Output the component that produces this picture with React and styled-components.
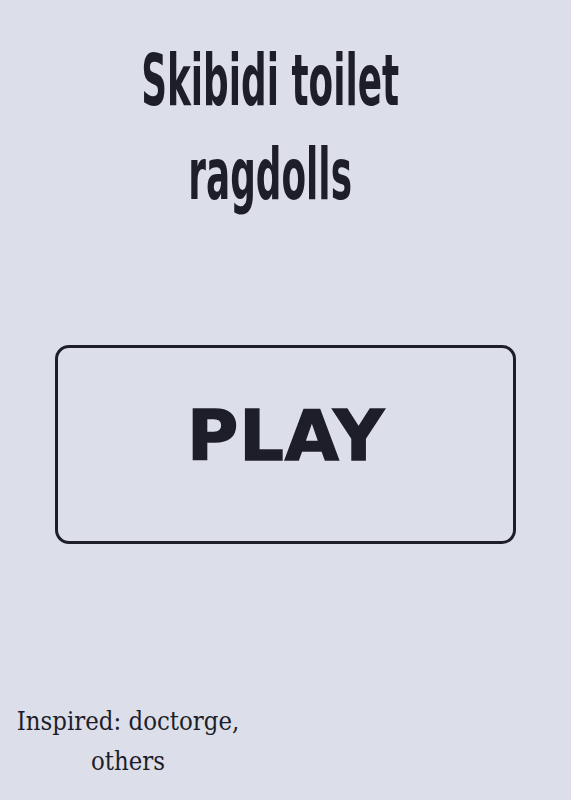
import React from "react";
import styled, { createGlobalStyle } from "styled-components";

const GlobalStyle = createGlobalStyle`
  html, body {
    margin: 0;
    padding: 0;
    background: #dcdfea;
  }
  body {
    color: #1e1e2a;
  }
`;

const Page = styled.div`
  width: 571px;
  height: 800px;
  display: flex;
  flex-direction: column;
  box-sizing: border-box;
`;

const TitleBox = styled.div`
  width: 540px;
  padding-top: 33px;
  display: flex;
  justify-content: center;
`;

const Title = styled.h1`
  margin: 0;
  display: inline-block;
  font-family: "DejaVu Sans Condensed", "DejaVu Sans", sans-serif;
  font-weight: 700;
  font-size: 72px;
  line-height: 94px;
  text-align: center;
  transform: scaleX(0.553);
  white-space: nowrap;
`;

const PlayButton = styled.button`
  margin: 124px 0 0 55px;
  width: 461px;
  height: 199px;
  box-sizing: border-box;
  border: 3px solid #1e1e2a;
  border-radius: 14px;
  background: transparent;
  color: #1e1e2a;
  font-family: "DejaVu Sans", sans-serif;
  font-weight: 700;
  font-size: 70px;
  letter-spacing: 1px;
  -webkit-text-stroke: 1.5px #1e1e2a;
  padding: 0 0 18px 1px;
  cursor: pointer;
`;

const Footer = styled.div`
  margin-top: auto;
  margin-bottom: 19px;
  width: 256px;
  text-align: center;
  font-family: "DejaVu Serif Condensed", "DejaVu Serif", serif;
  font-size: 25.5px;
  line-height: 40px;
`;

export default function App() {
  return (
    <>
      <GlobalStyle />
      <Page>
        <TitleBox>
          <Title>
            Skibidi toilet
            <br />
            ragdolls
          </Title>
        </TitleBox>
        <PlayButton>PLAY</PlayButton>
        <Footer>
          Inspired: doctorge,
          <br />
          others
        </Footer>
      </Page>
    </>
  );
}
